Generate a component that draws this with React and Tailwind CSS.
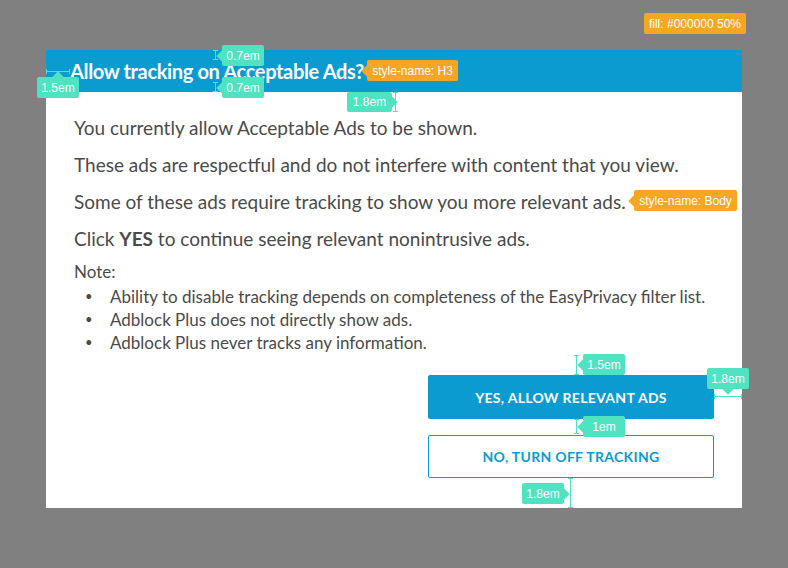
import React from "react";

const TEAL = "#50e3c2";
const ORANGE = "#f5a623";

function Tag({ x, y, w, h = 21, bg, text, arrow }) {
  const arrowEl = {
    left: <span className="absolute left-[-4px] top-1/2 -mt-[4px] w-[8px] h-[8px] rotate-45" style={{ background: bg }} />,
    right: <span className="absolute right-[-4px] top-1/2 -mt-[4px] w-[8px] h-[8px] rotate-45" style={{ background: bg }} />,
    up: <span className="absolute top-[-4px] left-1/2 -ml-[4px] w-[8px] h-[8px] rotate-45" style={{ background: bg }} />,
    down: <span className="absolute bottom-[-4px] left-1/2 -ml-[4px] w-[8px] h-[8px] rotate-45" style={{ background: bg }} />,
  }[arrow];
  return (
    <div
      className="absolute flex items-center justify-center rounded-[2px] text-white text-[12px] font-['Liberation_Sans',Arial,sans-serif] leading-none"
      style={{ left: x, top: y, width: w, height: h, background: bg }}
    >
      {arrowEl}
      <span className="relative">{text}</span>
    </div>
  );
}

function VBeam({ x, y1, y2 }) {
  return (
    <div className="absolute" style={{ left: x - 2, top: y1, width: 5, height: y2 - y1 }}>
      <div className="absolute left-[2px] top-0 bottom-0 w-px bg-[#50e3c2]" />
      <div className="absolute left-0 top-0 w-[5px] h-px bg-[#50e3c2]" />
      <div className="absolute left-0 bottom-0 w-[5px] h-px bg-[#50e3c2]" />
    </div>
  );
}

function HBeam({ y, x1, x2 }) {
  return (
    <div className="absolute" style={{ top: y - 2, left: x1, height: 5, width: x2 - x1 }}>
      <div className="absolute top-[2px] left-0 right-0 h-px bg-[#50e3c2]" />
      <div className="absolute top-0 left-0 h-[5px] w-px bg-[#50e3c2]" />
      <div className="absolute top-0 right-0 h-[5px] w-px bg-[#50e3c2]" />
    </div>
  );
}

export default function App() {
  return (
    <div className="relative w-[788px] h-[568px] overflow-hidden bg-[#808080] pt-[50px] pl-[46px] font-['Lato','Noto_Sans',sans-serif]">
      <div className="w-[696px] h-[458px] bg-white flex flex-col">
        <div className="bg-[#0a9bd0] h-[42px] pl-[24px] flex items-center">
          <h3 className="text-white text-[20px] font-bold tracking-[-0.35px] leading-none">
            Allow tracking on Acceptable Ads?
          </h3>
        </div>
        <div className="pl-[28px] pr-[28px] pt-[22px] text-[#4a4a4a]">
          <div className="flex flex-col gap-[10px] text-[19px] leading-[27px]">
            <p>You currently allow Acceptable Ads to be shown.</p>
            <p>These ads are respectful and do not interfere with content that you view.</p>
            <p>Some of these ads require tracking to show you more relevant ads.</p>
            <p>
              Click <strong className="font-bold">YES</strong> to continue seeing relevant nonintrusive ads.
            </p>
          </div>
          <p className="text-[17px] leading-[22px] mt-[9px]">Note:</p>
          <ul className="text-[17px] leading-[23px] mt-[2px]">
            {[
              "Ability to disable tracking depends on completeness of the EasyPrivacy filter list.",
              "Adblock Plus does not directly show ads.",
              "Adblock Plus never tracks any information.",
            ].map((t) => (
              <li key={t} className="flex">
                <span className="w-[36px] pl-[11px] text-[13px]">•</span>
                <span>{t}</span>
              </li>
            ))}
          </ul>
          <div className="flex flex-col items-end mt-[21px] gap-[16px]">
            <button className="w-[286px] h-[44px] rounded-[2px] bg-[#0a9bd0] text-white text-[14px] font-bold tracking-[0.3px]">
              YES, ALLOW RELEVANT ADS
            </button>
            <button className="w-[286px] h-[43px] rounded-[2px] border border-[#0a9bd0] bg-white text-[#0a9bd0] text-[14px] font-bold tracking-[0.3px]">
              NO, TURN OFF TRACKING
            </button>
          </div>
        </div>
      </div>

      <Tag x={644} y={13} w={102} bg={ORANGE} text="fill: #000000 50%" />
      <VBeam x={215} y1={50} y2={60} />
      <Tag x={222} y={45} w={42} bg={TEAL} text="0.7em" arrow="left" />
      <VBeam x={215} y1={82} y2={92} />
      <Tag x={222} y={77} w={42} bg={TEAL} text="0.7em" arrow="left" />
      <HBeam y={71} x1={46} x2={70} />
      <Tag x={37} y={77} w={42} bg={TEAL} text="1.5em" arrow="up" />
      <Tag x={367} y={60} w={91} bg={ORANGE} text="style-name: H3" arrow="left" />
      <VBeam x={395} y1={92} y2={112} />
      <Tag x={347} y={92} w={45} h={20} bg={TEAL} text="1.8em" arrow="right" />
      <Tag x={634} y={190} w={103} bg={ORANGE} text="style-name: Body" arrow="left" />
      <VBeam x={576} y1={355} y2={375} />
      <Tag x={583} y={354} w={42} bg={TEAL} text="1.5em" arrow="left" />
      <HBeam y={396} x1={714} x2={742} />
      <Tag x={707} y={368} w={42} bg={TEAL} text="1.8em" arrow="down" />
      <VBeam x={576} y1={419} y2={434} />
      <Tag x={583} y={416} w={42} bg={TEAL} text="1em" arrow="left" />
      <VBeam x={570} y1={478} y2={508} />
      <Tag x={522} y={483} w={42} bg={TEAL} text="1.8em" arrow="right" />
    </div>
  );
}
